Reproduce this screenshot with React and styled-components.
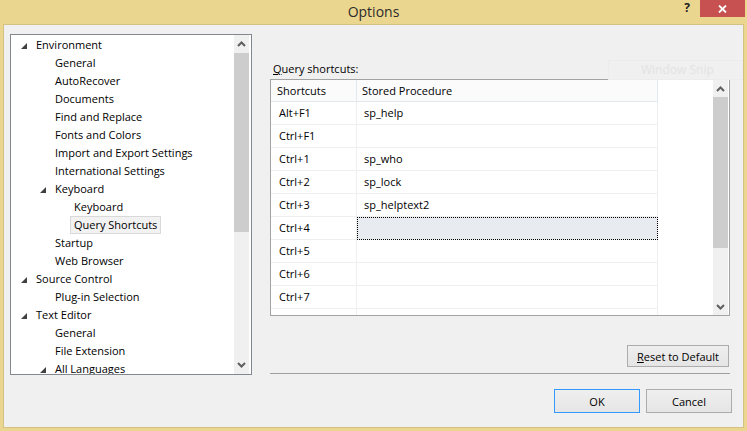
import React from "react";
import styled, { createGlobalStyle } from "styled-components";

const GlobalStyle = createGlobalStyle`
  html, body {
    margin: 0;
    padding: 0;
    background: #fff;
  }
  body {
    font-family: "Open Sans", "Noto Sans", sans-serif;
    font-size: 11px;
    color: #000;
  }
`;

const Window = styled.div`
  position: relative;
  width: 747px;
  height: 431px;
  box-sizing: border-box;
  padding: 0 3px 3px;
  background: #ebd68f;
  display: flex;
  flex-direction: column;
  overflow: hidden;
`;

const TitleBar = styled.div`
  flex: none;
  height: 24px;
  display: grid;
  grid-template-columns: 1fr auto 1fr;
  align-items: start;
`;

const TitleText = styled.div`
  grid-column: 2;
  font-size: 14px;
  line-height: 23px;
  color: #2b2b2b;
`;

const TitleControls = styled.div`
  grid-column: 3;
  justify-self: end;
  display: flex;
  align-items: flex-start;
`;

const HelpGlyph = styled.div`
  width: 14px;
  margin-right: 6px;
  text-align: center;
  font-size: 12px;
  font-weight: bold;
  line-height: 16px;
  color: #1e1e1e;
`;

const CloseButton = styled.div`
  width: 45px;
  height: 17px;
  margin-right: -1px;
  background: #c75050;
  display: flex;
  align-items: center;
  justify-content: center;
`;

const Client = styled.div`
  flex: 1;
  background: #f0f0f0;
  border: 1px solid #d4c184;
  padding: 9px 11px 14px 6px;
  display: flex;
  flex-direction: column;
`;

const MainRow = styled.div`
  flex: none;
  height: 341px;
  display: flex;
`;

const TreeBox = styled.div`
  width: 242px;
  box-sizing: border-box;
  border: 1px solid #828790;
  background: #fff;
  display: flex;
`;

const TreeList = styled.div`
  flex: 1;
  padding-top: 1px;
  overflow: hidden;
`;

const TreeRow = styled.div`
  height: 18px;
  display: flex;
  align-items: center;
  padding-left: ${(p) => 6 + p.$level * 19}px;
  white-space: nowrap;
`;

const Expander = styled.div`
  width: 19px;
  flex: none;
  display: flex;
  align-items: center;
  padding-left: 4px;
  padding-top: 1px;
  box-sizing: border-box;
`;

const TreeLabel = styled.span`
  margin-left: -4px;
  padding: 0 3px;
  line-height: 16px;
  border: 1px solid ${(p) => (p.$selected ? "#d9d9d9" : "transparent")};
  background: ${(p) => (p.$selected ? "#f2f2f2" : "transparent")};
`;

const ScrollBar = styled.div`
  width: 15px;
  flex: none;
  margin-right: ${(p) => p.$gap}px;
  background: #f0f0f0;
  display: flex;
  flex-direction: column;
`;

const ScrollArrow = styled.div`
  height: ${(p) => p.$size}px;
  flex: none;
  display: flex;
  align-items: center;
  justify-content: center;
`;

const ScrollThumb = styled.div`
  flex: none;
  height: ${(p) => p.$size}px;
  background: #cdcdcd;
`;

const ScrollTrack = styled.div`
  flex: 1;
`;

const RightPane = styled.div`
  width: 460px;
  margin-left: 18px;
  display: flex;
  flex-direction: column;
`;

const FieldLabel = styled.div`
  margin-top: 27px;
  margin-bottom: 2px;
  padding-left: 3px;
  height: 16px;
  line-height: 16px;
`;

const GridBox = styled.div`
  flex: none;
  height: 237px;
  box-sizing: border-box;
  border: 1px solid #a3a3a3;
  background: #fff;
  display: flex;
`;

const GridArea = styled.div`
  flex: 1;
  overflow: hidden;
`;

const GridRow = styled.div`
  display: flex;
`;

const HeaderCell = styled.div`
  width: ${(p) => p.$width}px;
  height: 22px;
  box-sizing: border-box;
  padding-left: ${(p) => p.$pad}px;
  line-height: 21px;
  background: #fbfbfc;
  border-right: 1px solid #e3e8ee;
  border-bottom: 1px solid #e3e8ee;
`;

const Cell = styled.div`
  width: ${(p) => p.$width}px;
  height: 23px;
  box-sizing: border-box;
  padding-left: ${(p) => p.$pad}px;
  line-height: 22px;
  border-right: 1px solid #efefef;
  border-bottom: 1px solid #efefef;
  background: ${(p) => (p.$active ? "#e8ecf0" : "#fff")};
  outline: ${(p) => (p.$active ? "1px dotted #000" : "none")};
  outline-offset: -1px;
`;

const ResetRow = styled.div`
  margin-top: 29px;
  display: flex;
  justify-content: flex-end;
  padding-right: 1px;
`;

const PushButton = styled.button`
  width: ${(p) => p.$width}px;
  height: ${(p) => p.$height}px;
  box-sizing: border-box;
  padding: 0;
  font: inherit;
  color: #000;
  background: linear-gradient(#efefef, #e5e5e5);
  border: 1px solid ${(p) => (p.$default ? "#3399ff" : "#acacac")};
  border-radius: 0;
  u {
    text-decoration: underline;
  }
`;

const Separator = styled.div`
  margin-top: 6px;
  height: 1px;
  background: #a0a0a0;
`;

const Footer = styled.div`
  margin-top: 14px;
  display: flex;
  justify-content: flex-end;
  gap: 6px;
`;

const Ghost = styled.div`
  position: absolute;
  left: 608px;
  top: 60px;
  width: 135px;
  height: 20px;
  box-sizing: border-box;
  padding-left: 32px;
  border: 1px solid #ececec;
  font-size: 12px;
  line-height: 18px;
  color: #e3e3e3;
  pointer-events: none;
`;

const Triangle = () => (
  <svg width="6" height="6" viewBox="0 0 6 6">
    <polygon points="6,0 6,6 0,6" fill="#404040" />
  </svg>
);

const Chevron = ({ down }) => (
  <svg width="9" height="6" viewBox="0 0 9 6">
    <polyline
      points={down ? "1,1 4.5,4.5 8,1" : "1,5 4.5,1.5 8,5"}
      fill="none"
      stroke="#5f5f5f"
      strokeWidth="2"
    />
  </svg>
);

const Scroller = ({ gap, arrow, thumb }) => (
  <ScrollBar $gap={gap}>
    <ScrollArrow $size={arrow}>
      <Chevron />
    </ScrollArrow>
    <ScrollThumb $size={thumb} />
    <ScrollTrack />
    <ScrollArrow $size={arrow}>
      <Chevron down />
    </ScrollArrow>
  </ScrollBar>
);

const treeItems = [
  { label: "Environment", level: 0, open: true },
  { label: "General", level: 1 },
  { label: "AutoRecover", level: 1 },
  { label: "Documents", level: 1 },
  { label: "Find and Replace", level: 1 },
  { label: "Fonts and Colors", level: 1 },
  { label: "Import and Export Settings", level: 1 },
  { label: "International Settings", level: 1 },
  { label: "Keyboard", level: 1, open: true },
  { label: "Keyboard", level: 2 },
  { label: "Query Shortcuts", level: 2, selected: true },
  { label: "Startup", level: 1 },
  { label: "Web Browser", level: 1 },
  { label: "Source Control", level: 0, open: true },
  { label: "Plug-in Selection", level: 1 },
  { label: "Text Editor", level: 0, open: true },
  { label: "General", level: 1 },
  { label: "File Extension", level: 1 },
  { label: "All Languages", level: 1, open: true },
];

// last row is only a sliver at the bottom edge, no text shows in it
const shortcuts = [
  ["Alt+F1", "sp_help"],
  ["Ctrl+F1", ""],
  ["Ctrl+1", "sp_who"],
  ["Ctrl+2", "sp_lock"],
  ["Ctrl+3", "sp_helptext2"],
  ["Ctrl+4", ""],
  ["Ctrl+5", ""],
  ["Ctrl+6", ""],
  ["Ctrl+7", ""],
  ["", ""],
];

const App = () => {
  return (
    <>
      <GlobalStyle />
      <Window>
        <TitleBar>
          <TitleText>Options</TitleText>
          <TitleControls>
            <HelpGlyph>?</HelpGlyph>
            <CloseButton>
              <svg width="9" height="8" viewBox="0 0 9 8">
                <path d="M1 0.5 L8 7.5 M8 0.5 L1 7.5" stroke="#fff" strokeWidth="1.8" />
              </svg>
            </CloseButton>
          </TitleControls>
        </TitleBar>

        <Client>
          <MainRow>
            <TreeBox>
              <TreeList>
                {treeItems.map((item, i) => (
                  <TreeRow key={i} $level={item.level}>
                    <Expander>{item.open && <Triangle />}</Expander>
                    <TreeLabel $selected={item.selected}>{item.label}</TreeLabel>
                  </TreeRow>
                ))}
              </TreeList>
              <Scroller gap={2} arrow={18} thumb={179} />
            </TreeBox>

            <RightPane>
              <FieldLabel>
                <u>Q</u>uery shortcuts:
              </FieldLabel>
              <GridBox>
                <GridArea>
                  <GridRow>
                    <HeaderCell $width={86} $pad={6}>Shortcuts</HeaderCell>
                    <HeaderCell $width={301} $pad={5}>Stored Procedure</HeaderCell>
                  </GridRow>
                  {shortcuts.map(([key, proc], i) => (
                    <GridRow key={i}>
                      <Cell $width={86} $pad={8}>{key}</Cell>
                      <Cell $width={301} $pad={7} $active={key === "Ctrl+4"}>
                        {proc}
                      </Cell>
                    </GridRow>
                  ))}
                </GridArea>
                <Scroller gap={1} arrow={17} thumb={151} />
              </GridBox>
              <ResetRow>
                <PushButton $width={102} $height={22}>
                  <u>R</u>eset to Default
                </PushButton>
              </ResetRow>
              <Separator />
            </RightPane>
          </MainRow>

          <Footer>
            <PushButton $width={86} $height={24} $default>
              OK
            </PushButton>
            <PushButton $width={86} $height={24}>
              Cancel
            </PushButton>
          </Footer>
        </Client>

        <Ghost>Window Snip</Ghost>
      </Window>
    </>
  );
};

export default App;
